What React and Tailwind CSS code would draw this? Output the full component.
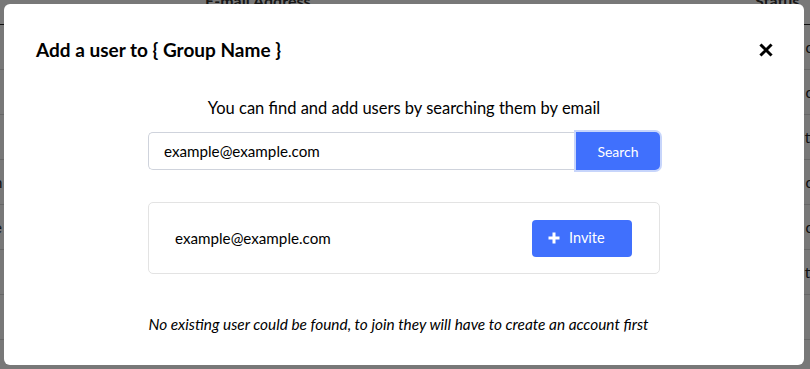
import React from "react";

const rows = [
  { l: "", r: "o" },
  { l: "", r: "o" },
  { l: "", r: "ti" },
  { l: "n", r: "o" },
  { l: "e", r: "o" },
  { l: "", r: "ti" },
  { l: "", r: "" },
];

export default function App() {
  return (
    <div
      className="relative w-[810px] h-[369px] overflow-hidden bg-white text-[#111]"
      style={{ fontFamily: "Lato, 'Open Sans', sans-serif" }}
    >
      {/* background table */}
      <div className="flex flex-col">
        <div className="flex h-[25px] items-start border-b border-[#222] text-[16px] font-bold text-[#333]">
          <div className="w-[205px]" />
          <div className="-mt-[9px] w-[550px] leading-[20px]">E-mail Address</div>
          <div className="-mt-[9px] leading-[20px]">Status</div>
        </div>
        {rows.map((r, i) => (
          <div key={i} className="flex h-[45px] items-center justify-between border-b border-[#dcdcdc] text-[15px] text-[#222]">
            <span className="-ml-[6px]">{r.l}</span>
            <span className="-mr-[4px]">{r.r}</span>
          </div>
        ))}
      </div>

      {/* overlay */}
      <div className="absolute inset-0 bg-black/[0.53]" />

      {/* modal */}
      <div className="absolute left-[4px] top-[4px] w-[800px] h-[361px] rounded-[6px] bg-white flex flex-col">
        <div className="flex items-center justify-between pl-8 pr-[31px] pt-[34px] h-[58px]">
          <h2 className="text-[19px] font-bold leading-[24px] text-black">Add a user to {"{"} Group Name {"}"}</h2>
          <svg width="14" height="14" viewBox="0 0 14 14">
            <path d="M2.5 2.5 L11.5 11.5 M11.5 2.5 L2.5 11.5" stroke="#000" strokeWidth="3" strokeLinecap="square" />
          </svg>
        </div>

        <p className="mt-[34px] text-center text-[16.5px] leading-[24px] text-black">
          You can find and add users by searching them by email
        </p>

        <div className="mx-auto mt-[12px] flex w-[512px]">
          <div className="flex h-[38px] flex-1 items-center rounded-l-[5px] border border-r-0 border-[#cfd3dc] pl-[15px] text-[15.2px] text-black">
            example@example.com
          </div>
          <button className="h-[38px] w-[84px] rounded-r-[5px] bg-[#4070fd] text-[14px] text-white ring-2 ring-[#c7d5fb]">
            Search
          </button>
        </div>

        <div className="mx-auto mt-[32px] flex h-[72px] w-[512px] items-center justify-between rounded-[5px] border border-[#e3e3e3] pl-[26px] pr-[27px]">
          <span className="text-[15.2px] text-black">example@example.com</span>
          <button className="flex h-[37px] w-[100px] items-center justify-start gap-[9px] rounded-[4px] bg-[#4070fd] pl-[16px] text-[14.5px] text-white">
            <svg width="12" height="12" viewBox="0 0 12 12">
              <path d="M6 0.5 V11.5 M0.5 6 H11.5" stroke="#fff" strokeWidth="3" />
            </svg>
            Invite
          </button>
        </div>

        <p className="mt-[40px] pr-[11px] text-center text-[15.4px] italic leading-[20px] text-black">
          No existing user could be found, to join they will have to create an account first
        </p>
      </div>
    </div>
  );
}
